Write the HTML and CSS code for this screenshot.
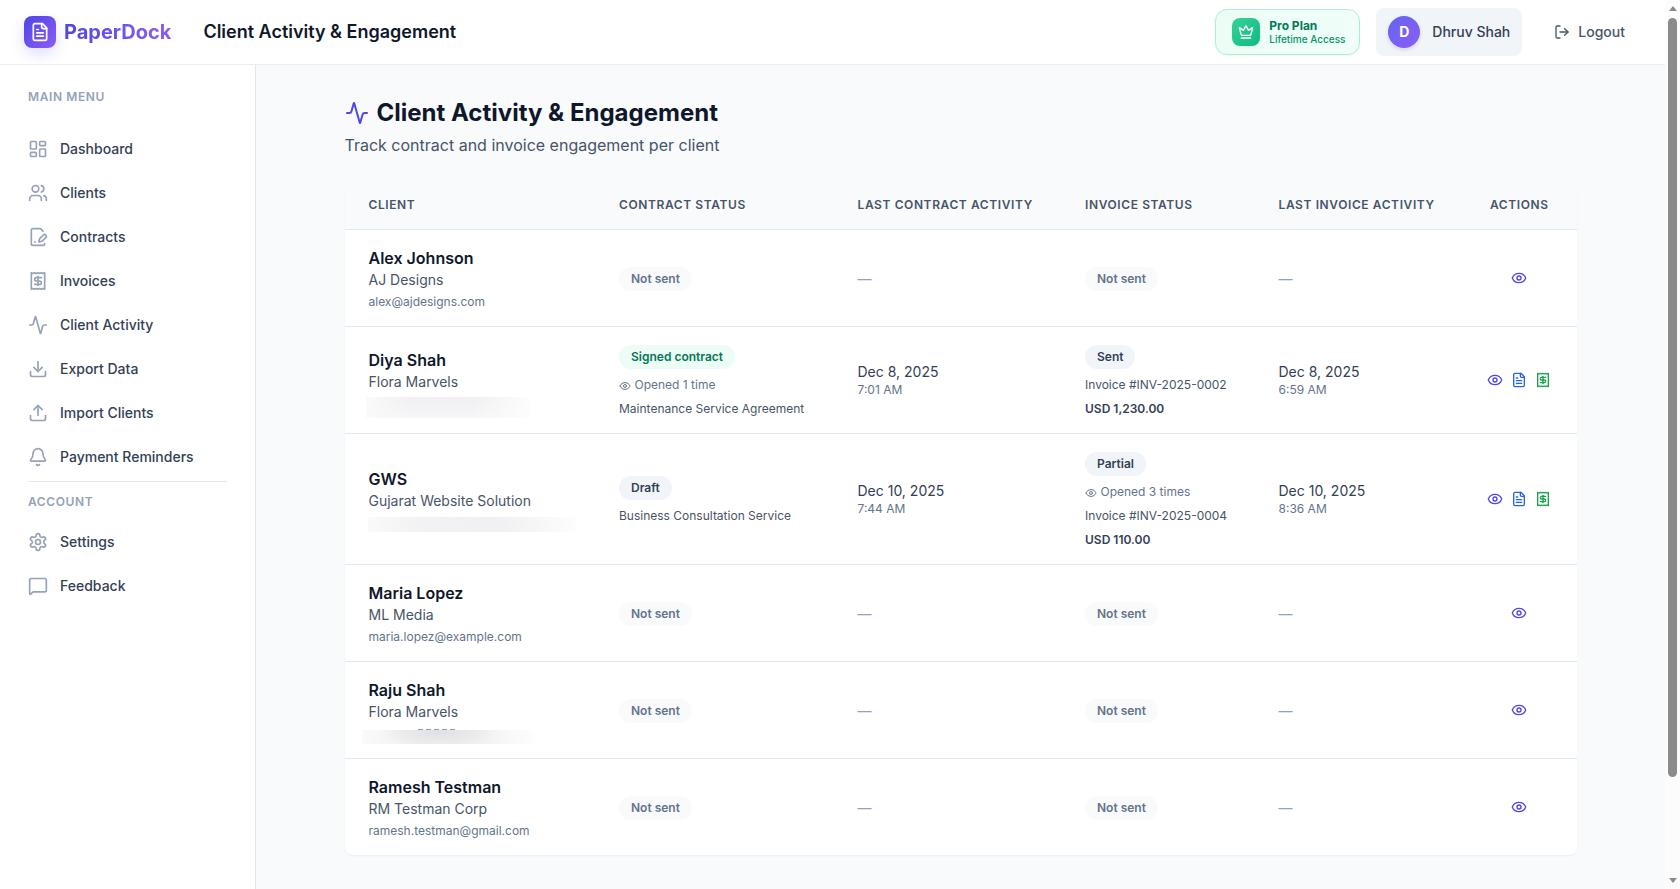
FILE: index.html
```html
<!DOCTYPE html>
<html lang="en">
  <head>
    <meta charset="UTF-8" />
    <title>PaperDock - Client Activity &amp; Engagement</title>
    <link rel="stylesheet" href="styles.css">
  </head>
  <body>
    <!-- icon sprite -->
    <svg class="sprite">
      <symbol id="file-text" viewBox="0 0 24 24"><path d="M15 2H6a2 2 0 0 0-2 2v16a2 2 0 0 0 2 2h12a2 2 0 0 0 2-2V7Z" /><path d="M14 2v4a2 2 0 0 0 2 2h4" /><path d="M10 9H8" /><path d="M16 13H8" /><path d="M16 17H8" /></symbol>
      <symbol id="crown" viewBox="0 0 24 24"><path d="M11.562 3.266a.5.5 0 0 1 .876 0L15.39 8.87a1 1 0 0 0 1.516.294L21.183 5.5a.5.5 0 0 1 .798.519l-2.834 10.246a1 1 0 0 1-.956.734H5.81a1 1 0 0 1-.957-.734L2.02 6.02a.5.5 0 0 1 .798-.519l4.276 3.664a1 1 0 0 0 1.516-.294z" /><path d="M5 21h14" /></symbol>
      <symbol id="logout" viewBox="0 0 24 24"><path d="M9 21H5a2 2 0 0 1-2-2V5a2 2 0 0 1 2-2h4" /><path d="m16 17 5-5-5-5" /><path d="M21 12H9" /></symbol>
      <symbol id="dashboard" viewBox="0 0 24 24"><rect width="7" height="9" x="3" y="3" rx="1" /><rect width="7" height="5" x="14" y="3" rx="1" /><rect width="7" height="9" x="14" y="12" rx="1" /><rect width="7" height="5" x="3" y="16" rx="1" /></symbol>
      <symbol id="users" viewBox="0 0 24 24"><path d="M16 21v-2a4 4 0 0 0-4-4H6a4 4 0 0 0-4 4v2" /><circle cx="9" cy="7" r="4" /><path d="M22 21v-2a4 4 0 0 0-3-3.87" /><path d="M16 3.13a4 4 0 0 1 0 7.75" /></symbol>
      <symbol id="contract" viewBox="0 0 24 24"><path d="m18 5-2.414-2.414A2 2 0 0 0 14.172 2H6a2 2 0 0 0-2 2v16a2 2 0 0 0 2 2h12a2 2 0 0 0 2-2" /><path d="M21.378 12.626a1 1 0 0 0-3.004-3.004l-4.01 4.012a2 2 0 0 0-.506.854l-.837 2.87a.5.5 0 0 0 .62.62l2.87-.837a2 2 0 0 0 .854-.506z" /><path d="M8 18h1" /></symbol>
      <symbol id="receipt" viewBox="0 0 24 24"><path d="M4 2v20l2-1 2 1 2-1 2 1 2-1 2 1 2-1 2 1V2l-2 1-2-1-2 1-2-1-2 1-2-1-2 1Z" /><path d="M16 8h-6a2 2 0 1 0 0 4h4a2 2 0 1 1 0 4H8" /><path d="M12 17.5v-11" /></symbol>
      <symbol id="activity" viewBox="0 0 24 24"><path d="M22 12h-2.48a2 2 0 0 0-1.93 1.46l-2.35 8.36a.25.25 0 0 1-.48 0L9.24 2.18a.25.25 0 0 0-.48 0l-2.35 8.36A2 2 0 0 1 4.49 12H2" /></symbol>
      <symbol id="download" viewBox="0 0 24 24"><path d="M21 15v4a2 2 0 0 1-2 2H5a2 2 0 0 1-2-2v-4" /><path d="m7 10 5 5 5-5" /><path d="M12 15V3" /></symbol>
      <symbol id="upload" viewBox="0 0 24 24"><path d="M21 15v4a2 2 0 0 1-2 2H5a2 2 0 0 1-2-2v-4" /><path d="m17 8-5-5-5 5" /><path d="M12 3v12" /></symbol>
      <symbol id="bell" viewBox="0 0 24 24"><path d="M10.268 21a2 2 0 0 0 3.464 0" /><path d="M3.262 15.326A1 1 0 0 0 4 17h16a1 1 0 0 0 .74-1.673C19.41 13.956 18 12.499 18 8A6 6 0 0 0 6 8c0 4.499-1.411 5.956-2.738 7.326" /></symbol>
      <symbol id="settings" viewBox="0 0 24 24"><path d="M12.22 2h-.44a2 2 0 0 0-2 2v.18a2 2 0 0 1-1 1.73l-.43.25a2 2 0 0 1-2 0l-.15-.08a2 2 0 0 0-2.73.73l-.22.38a2 2 0 0 0 .73 2.73l.15.1a2 2 0 0 1 1 1.72v.51a2 2 0 0 1-1 1.74l-.15.09a2 2 0 0 0-.73 2.73l.22.38a2 2 0 0 0 2.73.73l.15-.08a2 2 0 0 1 2 0l.43.25a2 2 0 0 1 1 1.73V20a2 2 0 0 0 2 2h.44a2 2 0 0 0 2-2v-.18a2 2 0 0 1 1-1.73l.43-.25a2 2 0 0 1 2 0l.15.08a2 2 0 0 0 2.73-.73l.22-.39a2 2 0 0 0-.73-2.73l-.15-.08a2 2 0 0 1-1-1.74v-.5a2 2 0 0 1 1-1.74l.15-.09a2 2 0 0 0 .73-2.73l-.22-.38a2 2 0 0 0-2.73-.73l-.15.08a2 2 0 0 1-2 0l-.43-.25a2 2 0 0 1-1-1.73V4a2 2 0 0 0-2-2z" /><circle cx="12" cy="12" r="3" /></symbol>
      <symbol id="message" viewBox="0 0 24 24"><path d="M22 17a2 2 0 0 1-2 2H6.828a2 2 0 0 0-1.414.586l-2.202 2.202A.71.71 0 0 1 2 21.286V5a2 2 0 0 1 2-2h16a2 2 0 0 1 2 2z" /></symbol>
      <symbol id="eye" viewBox="0 0 24 24"><path d="M2.062 12.348a1 1 0 0 1 0-.696 10.75 10.75 0 0 1 19.876 0 1 1 0 0 1 0 .696 10.75 10.75 0 0 1-19.876 0" /><circle cx="12" cy="12" r="3" /></symbol>
    </svg>

    <div class="app">
      <header class="topbar">
        <div class="logo"><svg class="icon"><use href="#file-text" /></svg></div>
        <span class="brand">PaperDock</span>
        <span class="page-name">Client Activity &amp; Engagement</span>
        <div class="plan">
          <div class="plan-icon"><svg class="icon"><use href="#crown" /></svg></div>
          <div>
            <div class="plan-name">Pro Plan</div>
            <div class="plan-sub">Lifetime Access</div>
          </div>
        </div>
        <div class="user">
          <div class="avatar">D</div>
          <span>Dhruv Shah</span>
        </div>
        <a class="logout"><svg class="icon"><use href="#logout" /></svg>Logout</a>
      </header>

      <div class="layout">
        <nav class="sidebar">
          <h2 class="menu-title">Main Menu</h2>
          <a class="menu-item"><svg class="icon"><use href="#dashboard" /></svg>Dashboard</a>
          <a class="menu-item"><svg class="icon"><use href="#users" /></svg>Clients</a>
          <a class="menu-item"><svg class="icon"><use href="#contract" /></svg>Contracts</a>
          <a class="menu-item"><svg class="icon"><use href="#receipt" /></svg>Invoices</a>
          <a class="menu-item"><svg class="icon"><use href="#activity" /></svg>Client Activity</a>
          <a class="menu-item"><svg class="icon"><use href="#download" /></svg>Export Data</a>
          <a class="menu-item"><svg class="icon"><use href="#upload" /></svg>Import Clients</a>
          <a class="menu-item"><svg class="icon"><use href="#bell" /></svg>Payment Reminders</a>
          <h2 class="menu-title account">Account</h2>
          <a class="menu-item"><svg class="icon"><use href="#settings" /></svg>Settings</a>
          <a class="menu-item"><svg class="icon"><use href="#message" /></svg>Feedback</a>
        </nav>

        <main class="content">
          <h1><svg class="icon"><use href="#activity" /></svg>Client Activity &amp; Engagement</h1>
          <p class="subtitle">Track contract and invoice engagement per client</p>

          <div class="card">
            <table>
              <colgroup>
                <col class="col-client" />
                <col class="col-contract" />
                <col class="col-contract-date" />
                <col class="col-invoice" />
                <col class="col-invoice-date" />
                <col class="col-actions" />
              </colgroup>
              <thead>
                <tr>
                  <th>Client</th>
                  <th>Contract Status</th>
                  <th>Last Contract Activity</th>
                  <th>Invoice Status</th>
                  <th>Last Invoice Activity</th>
                  <th class="center">Actions</th>
                </tr>
              </thead>
              <tbody>
                <tr>
                  <td>
                    <div class="name">Alex Johnson</div>
                    <div class="company">AJ Designs</div>
                    <div class="email">alex@ajdesigns.com</div>
                  </td>
                  <td><div class="status"><span class="badge muted">Not sent</span></div></td>
                  <td><span class="none">—</span></td>
                  <td><div class="status"><span class="badge muted">Not sent</span></div></td>
                  <td><span class="none">—</span></td>
                  <td>
                    <div class="actions"><svg class="icon view"><use href="#eye" /></svg></div>
                  </td>
                </tr>
                <tr>
                  <td>
                    <div class="name">Diya Shah</div>
                    <div class="company">Flora Marvels</div>
                    <div class="email"><span class="hidden-email diya"></span></div>
                  </td>
                  <td>
                    <div class="status">
                      <span class="badge signed">Signed contract</span>
                      <div class="opened"><svg class="icon"><use href="#eye" /></svg>Opened 1 time</div>
                      <div class="doc">Maintenance Service Agreement</div>
                    </div>
                  </td>
                  <td>
                    <div class="date">Dec 8, 2025</div>
                    <div class="time">7:01 AM</div>
                  </td>
                  <td>
                    <div class="status">
                      <span class="badge">Sent</span>
                      <div class="doc">Invoice #INV-2025-0002</div>
                      <div class="amount">USD 1,230.00</div>
                    </div>
                  </td>
                  <td>
                    <div class="date">Dec 8, 2025</div>
                    <div class="time">6:59 AM</div>
                  </td>
                  <td>
                    <div class="actions">
                      <svg class="icon view"><use href="#eye" /></svg>
                      <svg class="icon contract"><use href="#file-text" /></svg>
                      <svg class="icon invoice"><use href="#receipt" /></svg>
                    </div>
                  </td>
                </tr>
                <tr>
                  <td>
                    <div class="name">GWS</div>
                    <div class="company">Gujarat Website Solution</div>
                    <div class="email"><span class="hidden-email gws"></span></div>
                  </td>
                  <td>
                    <div class="status">
                      <span class="badge">Draft</span>
                      <div class="doc">Business Consultation Service</div>
                    </div>
                  </td>
                  <td>
                    <div class="date">Dec 10, 2025</div>
                    <div class="time">7:44 AM</div>
                  </td>
                  <td>
                    <div class="status">
                      <span class="badge">Partial</span>
                      <div class="opened"><svg class="icon"><use href="#eye" /></svg>Opened 3 times</div>
                      <div class="doc">Invoice #INV-2025-0004</div>
                      <div class="amount">USD 110.00</div>
                    </div>
                  </td>
                  <td>
                    <div class="date">Dec 10, 2025</div>
                    <div class="time">8:36 AM</div>
                  </td>
                  <td>
                    <div class="actions">
                      <svg class="icon view"><use href="#eye" /></svg>
                      <svg class="icon contract"><use href="#file-text" /></svg>
                      <svg class="icon invoice"><use href="#receipt" /></svg>
                    </div>
                  </td>
                </tr>
                <tr>
                  <td>
                    <div class="name">Maria Lopez</div>
                    <div class="company">ML Media</div>
                    <div class="email">maria.lopez@example.com</div>
                  </td>
                  <td><div class="status"><span class="badge muted">Not sent</span></div></td>
                  <td><span class="none">—</span></td>
                  <td><div class="status"><span class="badge muted">Not sent</span></div></td>
                  <td><span class="none">—</span></td>
                  <td>
                    <div class="actions"><svg class="icon view"><use href="#eye" /></svg></div>
                  </td>
                </tr>
                <tr>
                  <td>
                    <div class="name">Raju Shah</div>
                    <div class="company">Flora Marvels</div>
                    <div class="email"><span class="hidden-email raju"></span></div>
                  </td>
                  <td><div class="status"><span class="badge muted">Not sent</span></div></td>
                  <td><span class="none">—</span></td>
                  <td><div class="status"><span class="badge muted">Not sent</span></div></td>
                  <td><span class="none">—</span></td>
                  <td>
                    <div class="actions"><svg class="icon view"><use href="#eye" /></svg></div>
                  </td>
                </tr>
                <tr>
                  <td>
                    <div class="name">Ramesh Testman</div>
                    <div class="company">RM Testman Corp</div>
                    <div class="email">ramesh.testman@gmail.com</div>
                  </td>
                  <td><div class="status"><span class="badge muted">Not sent</span></div></td>
                  <td><span class="none">—</span></td>
                  <td><div class="status"><span class="badge muted">Not sent</span></div></td>
                  <td><span class="none">—</span></td>
                  <td>
                    <div class="actions"><svg class="icon view"><use href="#eye" /></svg></div>
                  </td>
                </tr>
              </tbody>
            </table>
          </div>
        </main>
      </div>
    </div>

    <div class="scrollbar">
      <span class="arrow up"></span>
      <span class="thumb"></span>
      <span class="arrow down"></span>
    </div>
  </body>
</html>
```

FILE: styles.css
```css
* {
  box-sizing: border-box;
  margin: 0;
  padding: 0;
}
body {
  display: flex;
  height: 100vh;
  overflow: hidden;
  font-family: Inter, sans-serif;
  font-size: 14px;
  line-height: 20px;
  color: #334155;
  background: #f8fafc;
}
.sprite {
  display: none;
}
.icon {
  display: block;
  flex: none;
  width: 16px;
  height: 16px;
  fill: none;
  stroke: currentColor;
  stroke-width: 2;
  stroke-linecap: round;
  stroke-linejoin: round;
}
.app {
  flex: 1;
  display: flex;
  flex-direction: column;
}

/* top bar */
.topbar {
  display: flex;
  align-items: center;
  height: 65px;
  padding: 0 24px;
  background: #fff;
  border-bottom: 1px solid #e9eef5;
}
.logo {
  display: flex;
  align-items: center;
  justify-content: center;
  width: 32px;
  height: 32px;
  margin-right: 8px;
  border-radius: 8px;
  color: #fff;
  background: linear-gradient(135deg, #4f46e5, #8b5cf6);
  box-shadow: 0 6px 14px rgba(99, 102, 241, 0.2);
}
.logo .icon {
  width: 20px;
  height: 20px;
}
.brand {
  font-size: 20px;
  line-height: 28px;
  font-weight: 700;
  color: transparent;
  background: linear-gradient(90deg, #4f46e5, #8b5cf6);
  background-clip: text;
  -webkit-background-clip: text;
}
.page-name {
  margin-left: 32px;
  font-size: 18px;
  line-height: 28px;
  font-weight: 600;
  color: #0f172a;
}
.plan {
  display: flex;
  align-items: center;
  gap: 9px;
  width: 145px;
  height: 46px;
  margin-left: auto;
  padding: 0 15px 0 16px;
  border: 1px solid #a7f3d0;
  border-radius: 12px;
  background: linear-gradient(90deg, #ecfdf5, #f0fdfa);
  box-shadow: 0 1px 2px rgba(0, 0, 0, 0.05);
}
.plan-icon {
  display: flex;
  flex: none;
  align-items: center;
  justify-content: center;
  width: 28px;
  height: 28px;
  border-radius: 8px;
  color: #fff;
  background: linear-gradient(135deg, #34d399, #10b981);
  box-shadow: 0 1px 2px rgba(0, 0, 0, 0.05);
}
.plan-name {
  font-size: 12px;
  line-height: 15px;
  font-weight: 700;
  color: #047857;
}
.plan-sub {
  font-size: 10px;
  line-height: 12.5px;
  font-weight: 500;
  color: #059669;
  white-space: nowrap;
}
.user {
  display: flex;
  align-items: center;
  gap: 12px;
  width: 146px;
  height: 48px;
  margin: 0 16px;
  padding: 0 12px;
  border-radius: 8px;
  background: #f1f5f9;
  font-weight: 500;
  white-space: nowrap;
}
.avatar {
  width: 32px;
  height: 32px;
  border-radius: 50%;
  color: #fff;
  background: linear-gradient(135deg, #6366f1, #8b5cf6);
  box-shadow: 0 2px 4px rgba(0, 0, 0, 0.12);
  line-height: 32px;
  font-weight: 700;
  text-align: center;
}
.logout {
  display: flex;
  align-items: center;
  gap: 8px;
  padding: 0 16px;
  font-weight: 500;
  color: #475569;
}

/* sidebar */
.layout {
  flex: 1;
  display: flex;
}
.sidebar {
  width: 256px;
  padding: 24px 28px 0;
  background: #fff;
  border-right: 1px solid #e2e8f0;
}
.menu-title {
  margin-bottom: 22px;
  font-size: 12px;
  line-height: 16px;
  font-weight: 600;
  letter-spacing: 0.6px;
  color: #94a3b8;
  text-transform: uppercase;
}
.menu-title.account {
  margin-top: 2px;
  margin-bottom: 10px;
  padding-top: 12px;
  border-top: 1px solid #e2e8f0;
}
.menu-item {
  display: flex;
  align-items: center;
  gap: 12px;
  height: 44px;
  font-weight: 500;
}
.menu-item .icon {
  width: 20px;
  height: 20px;
  color: #94a3b8;
}

/* main */
.content {
  flex: 1;
  max-width: 1280px;
  margin: 0 auto;
  padding: 32px 24px 0;
}
h1 {
  display: flex;
  align-items: center;
  gap: 8px;
  font-size: 24px;
  line-height: 32px;
  font-weight: 700;
  color: #0f172a;
}
h1 .icon {
  width: 24px;
  height: 24px;
  color: #4f46e5;
}
.subtitle {
  margin: 4px 0 24px;
  font-size: 16px;
  line-height: 24px;
  color: #475569;
}
.card {
  overflow: hidden;
  border-radius: 8px;
  background: #fff;
  box-shadow: 0 1px 2px rgba(0, 0, 0, 0.05);
}
table {
  width: 100%;
  table-layout: fixed;
  border-collapse: separate;
  border-spacing: 0;
}
.col-client {
  width: 250.5px;
}
.col-contract {
  width: 238.5px;
}
.col-contract-date {
  width: 227.5px;
}
.col-invoice {
  width: 193.5px;
}
.col-invoice-date {
  width: 207.5px;
}
th {
  padding: 16px 24px;
  border-bottom: 1px solid #e2e8f0;
  background: #f8fafc;
  font-size: 12px;
  line-height: 16px;
  font-weight: 600;
  letter-spacing: 0.6px;
  text-align: left;
  text-transform: uppercase;
  white-space: nowrap;
  color: #475569;
}
th.center {
  text-align: center;
}
td {
  padding: 16px 24px;
  border-bottom: 1px solid #e2e8f0;
  vertical-align: middle;
  white-space: nowrap;
}
tbody tr:last-child td {
  border-bottom: none;
}
.name {
  font-size: 16px;
  line-height: 24px;
  font-weight: 600;
  color: #0f172a;
}
.company {
  color: #475569;
}
.email {
  position: relative;
  height: 16px;
  margin-top: 4px;
  font-size: 12px;
  line-height: 16px;
  color: #64748b;
}
/* blurred-out addresses */
.hidden-email {
  position: absolute;
  background: linear-gradient(90deg, #fafafa, #f2f2f4 25%, #f1f1f3 65%, #fdfdfd);
}
.hidden-email.diya {
  top: 1px;
  left: -3px;
  width: 165px;
  height: 21px;
  background: linear-gradient(90deg, #fafafa, transparent 25%, transparent 65%, #fdfdfd), linear-gradient(#f0f0f2, #f6f6f8);
}
.hidden-email.gws {
  top: 2px;
  left: -1px;
  width: 208px;
  height: 15px;
}
.hidden-email.raju {
  top: 4px;
  left: -7px;
  width: 171px;
  height: 14px;
  background: radial-gradient(ellipse 60px 20px at 45% 0, #dfe0e3, transparent), linear-gradient(90deg, #fafafa, #f1f1f3 30%, #f0f1f2 65%, #fdfdfd);
}
.hidden-email.raju::before {
  content: "";
  position: absolute;
  top: -1px;
  left: 56px;
  width: 38px;
  height: 1px;
  background: repeating-linear-gradient(90deg, #94a0b0 0 5px, transparent 5px 8px);
}
.status {
  padding-top: 2px;
  font-size: 12px;
  line-height: 16px;
}
.badge {
  display: block;
  width: fit-content;
  padding: 4px 12px;
  border-radius: 12px;
  background: #f1f5f9;
  font-weight: 600;
  color: #334155;
}
.badge.muted {
  background: #f8fafc;
  color: #64748b;
}
.badge.signed {
  background: #ecfdf5;
  color: #047857;
}
.opened {
  display: flex;
  align-items: center;
  gap: 3.5px;
  margin-top: 8px;
  color: #64748b;
}
.opened .icon {
  width: 12px;
  height: 12px;
  margin-top: 2px;
}
.doc {
  margin-top: 8px;
  color: #475569;
}
.amount {
  margin-top: 8px;
  font-weight: 600;
}
.time {
  font-size: 12px;
  line-height: 16px;
  color: #64748b;
}
.none {
  display: block;
  padding-top: 1px;
  color: #94a3b8;
}
.actions {
  display: flex;
  justify-content: center;
  gap: 8px;
  margin: 0 -6px;
}
.view {
  color: #4f46e5;
}
.contract {
  color: #2563eb;
}
.invoice {
  color: #16a34a;
}

/* page scrollbar */
.scrollbar {
  display: flex;
  flex-direction: column;
  align-items: center;
  width: 15px;
  padding: 6px 0;
  background: #fcfcfc;
}
.thumb {
  width: 9px;
  height: 759px;
  margin-top: 7px;
  border-radius: 5px;
  background: #8b8b8b;
}
.arrow {
  border: 4.5px solid transparent;
}
.arrow.up {
  border-top: 0;
  border-bottom: 5px solid #8b8b8b;
}
.arrow.down {
  margin-top: auto;
  border-bottom: 0;
  border-top: 5px solid #8b8b8b;
}
```
